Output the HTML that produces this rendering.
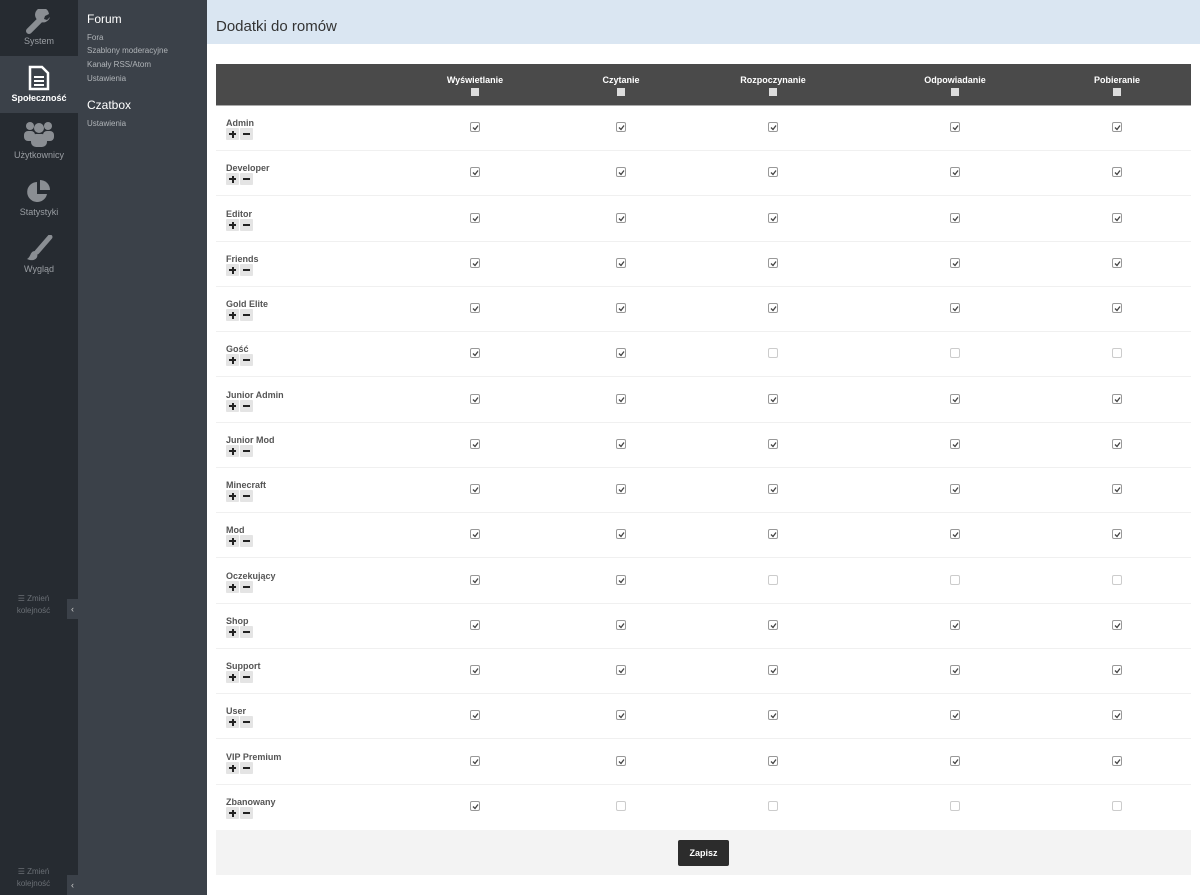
<!DOCTYPE html>
<html><head><meta charset="utf-8"><style>
*{margin:0;padding:0;box-sizing:border-box}
body{width:1200px;height:895px;overflow:hidden;font-family:"Liberation Sans",sans-serif;background:#fff;position:relative}
.s1{position:absolute;left:0;top:0;width:78px;height:895px;background:#262b31}
.s2{position:absolute;left:78px;top:0;width:129px;height:895px;background:#3b4149}
.act{position:absolute;left:0;top:56px;width:78px;height:57px;background:#3b4149}
.ni{position:absolute;left:0;width:78px;text-align:center;font-size:9px;color:#9a9ea3}
.s2 h3{position:absolute;left:9px;font-size:12px;color:#fff;font-weight:normal}
.s2 a{position:absolute;left:9px;font-size:8px;color:#b0b4b8}
.hdr{position:absolute;left:207px;top:0;width:993px;height:44px;background:#dae6f2}
.hdr span{position:absolute;left:9px;top:18px;font-size:15px;color:#333}
.th{position:absolute;left:216px;top:64px;width:975px;height:42px;background:#4a4a4a;border-bottom:1px solid #aaa}
.th div{position:absolute;top:11px;width:120px;margin-left:-60px;text-align:center;color:#fff;font-size:9px;font-weight:bold}
.th i{display:block;width:8px;height:8px;background:#ddd;margin:3px auto 0}
.row{position:absolute;left:216px;width:975px;height:45px;border-bottom:1px solid #f0f0f0}
.row b{position:absolute;left:10px;top:12px;font-size:9px;color:#555}
.pm{position:absolute;left:10px;top:22px;height:13px}
.pm span{position:relative;display:inline-block;width:13px;height:12px;background:#e4e4e4;border-radius:1px;margin-right:1px;vertical-align:top}
.pm span.p:before{content:"";position:absolute;left:3px;top:5px;width:7px;height:2px;background:#222}
.pm span.p:after{content:"";position:absolute;left:5.5px;top:2.5px;width:2px;height:7px;background:#222}
.pm span.m:before{content:"";position:absolute;left:3px;top:5px;width:7px;height:2px;background:#222}
.cb{position:absolute;top:16px;width:10px;height:10px;margin-left:-5px;border:1px solid #999;border-radius:2px;background:#fff}
.cb.u{border-color:#ccc}
.cb svg{position:absolute;left:1px;top:1px}
.ft{position:absolute;left:216px;top:830px;width:975px;height:45px;background:#f3f3f3}
.btn{position:absolute;left:678px;top:840px;width:51px;height:26px;background:#2c2c2c;border-radius:2px;color:#fff;font-size:9px;font-weight:bold;text-align:center;line-height:26px}
.tog{position:absolute;left:67px;width:11px;height:20px;background:#3b4149;color:#ccc;font-size:9px;text-align:center;line-height:20px}
.zm{position:absolute;left:0;width:67px;text-align:center;font-size:8px;color:#6a6f75;line-height:12px}
</style></head><body>
<div class="s1"></div>
<div class="act"></div>
<svg style="position:absolute;left:25px;top:9px" width="28" height="26" viewBox="0 0 28 26"><path d="M4 22 L15 11" stroke="#8a8e93" stroke-width="6" stroke-linecap="round"/><path d="M14 12 A7 7 0 1 1 24 5 L20 7 L19 10 L22 11 L25 8 A7 7 0 0 1 14 12Z" fill="#8a8e93"/></svg>
<div class="ni" style="top:36px">System</div>
<svg style="position:absolute;left:28px;top:65px" width="22" height="26" viewBox="0 0 22 26"><path d="M2 2 H14 L20 8 V24 H2Z" fill="none" stroke="#fff" stroke-width="2.5"/><path d="M6 12H16M6 16H16M6 20H16" stroke="#fff" stroke-width="2"/></svg>
<div class="ni" style="top:93px;color:#fff;font-weight:bold">Społeczność</div>
<svg style="position:absolute;left:23px;top:120px" width="32" height="28" viewBox="0 0 32 28"><g fill="#8a8e93"><circle cx="7" cy="6" r="4"/><circle cx="25" cy="6" r="4"/><circle cx="16" cy="8" r="5"/><rect x="1" y="11" width="11" height="10" rx="4"/><rect x="20" y="11" width="11" height="10" rx="4"/><rect x="8" y="14" width="16" height="13" rx="5"/></g></svg>
<div class="ni" style="top:150px">Użytkownicy</div>
<svg style="position:absolute;left:26px;top:179px" width="26" height="26" viewBox="0 0 26 26"><path d="M11 3 A10 10 0 1 0 21 15 H11Z" fill="#8a8e93"/><path d="M14 1 A10 10 0 0 1 24 11 H14Z" fill="#8a8e93"/></svg>
<div class="ni" style="top:207px">Statystyki</div>
<svg style="position:absolute;left:25px;top:235px" width="28" height="28" viewBox="0 0 28 28"><path d="M25 2 L12 17" stroke="#8a8e93" stroke-width="5" stroke-linecap="round"/><path d="M10 16 C5 16 6 22 2 24 C8 27 14 24 12 18Z" fill="#8a8e93"/></svg>
<div class="ni" style="top:264px">Wygląd</div>
<div class="zm" style="top:593px">☰ Zmień<br>kolejność</div>
<div class="tog" style="top:599px">‹</div>
<div class="zm" style="top:866px">☰ Zmień<br>kolejność</div>
<div class="tog" style="top:875px">‹</div>
<div class="s2">
<h3 style="top:12px">Forum</h3>
<a style="top:33px">Fora</a><a style="top:46px">Szablony moderacyjne</a><a style="top:60px">Kanały RSS/Atom</a><a style="top:74px">Ustawienia</a>
<h3 style="top:98px">Czatbox</h3>
<a style="top:119px">Ustawienia</a>
</div>
<div class="hdr"><span>Dodatki do romów</span></div>
<div class="th">
<div style="left:259px">Wyświetlanie<i></i></div>
<div style="left:405px">Czytanie<i></i></div>
<div style="left:557px">Rozpoczynanie<i></i></div>
<div style="left:739px">Odpowiadanie<i></i></div>
<div style="left:901px">Pobieranie<i></i></div>
</div>
<div class="row" style="top:106px"><b>Admin</b><div class="pm"><span class="p"></span><span class="m"></span></div><div class="cb" style="left:259px"><svg width="7" height="7"><path d="M1 3.5L3 5.5L6 1.5" stroke="#444" stroke-width="1.3" fill="none"/></svg></div><div class="cb" style="left:405px"><svg width="7" height="7"><path d="M1 3.5L3 5.5L6 1.5" stroke="#444" stroke-width="1.3" fill="none"/></svg></div><div class="cb" style="left:557px"><svg width="7" height="7"><path d="M1 3.5L3 5.5L6 1.5" stroke="#444" stroke-width="1.3" fill="none"/></svg></div><div class="cb" style="left:739px"><svg width="7" height="7"><path d="M1 3.5L3 5.5L6 1.5" stroke="#444" stroke-width="1.3" fill="none"/></svg></div><div class="cb" style="left:901px"><svg width="7" height="7"><path d="M1 3.5L3 5.5L6 1.5" stroke="#444" stroke-width="1.3" fill="none"/></svg></div></div>
<div class="row" style="top:151px"><b>Developer</b><div class="pm"><span class="p"></span><span class="m"></span></div><div class="cb" style="left:259px"><svg width="7" height="7"><path d="M1 3.5L3 5.5L6 1.5" stroke="#444" stroke-width="1.3" fill="none"/></svg></div><div class="cb" style="left:405px"><svg width="7" height="7"><path d="M1 3.5L3 5.5L6 1.5" stroke="#444" stroke-width="1.3" fill="none"/></svg></div><div class="cb" style="left:557px"><svg width="7" height="7"><path d="M1 3.5L3 5.5L6 1.5" stroke="#444" stroke-width="1.3" fill="none"/></svg></div><div class="cb" style="left:739px"><svg width="7" height="7"><path d="M1 3.5L3 5.5L6 1.5" stroke="#444" stroke-width="1.3" fill="none"/></svg></div><div class="cb" style="left:901px"><svg width="7" height="7"><path d="M1 3.5L3 5.5L6 1.5" stroke="#444" stroke-width="1.3" fill="none"/></svg></div></div>
<div class="row" style="top:197px"><b>Editor</b><div class="pm"><span class="p"></span><span class="m"></span></div><div class="cb" style="left:259px"><svg width="7" height="7"><path d="M1 3.5L3 5.5L6 1.5" stroke="#444" stroke-width="1.3" fill="none"/></svg></div><div class="cb" style="left:405px"><svg width="7" height="7"><path d="M1 3.5L3 5.5L6 1.5" stroke="#444" stroke-width="1.3" fill="none"/></svg></div><div class="cb" style="left:557px"><svg width="7" height="7"><path d="M1 3.5L3 5.5L6 1.5" stroke="#444" stroke-width="1.3" fill="none"/></svg></div><div class="cb" style="left:739px"><svg width="7" height="7"><path d="M1 3.5L3 5.5L6 1.5" stroke="#444" stroke-width="1.3" fill="none"/></svg></div><div class="cb" style="left:901px"><svg width="7" height="7"><path d="M1 3.5L3 5.5L6 1.5" stroke="#444" stroke-width="1.3" fill="none"/></svg></div></div>
<div class="row" style="top:242px"><b>Friends</b><div class="pm"><span class="p"></span><span class="m"></span></div><div class="cb" style="left:259px"><svg width="7" height="7"><path d="M1 3.5L3 5.5L6 1.5" stroke="#444" stroke-width="1.3" fill="none"/></svg></div><div class="cb" style="left:405px"><svg width="7" height="7"><path d="M1 3.5L3 5.5L6 1.5" stroke="#444" stroke-width="1.3" fill="none"/></svg></div><div class="cb" style="left:557px"><svg width="7" height="7"><path d="M1 3.5L3 5.5L6 1.5" stroke="#444" stroke-width="1.3" fill="none"/></svg></div><div class="cb" style="left:739px"><svg width="7" height="7"><path d="M1 3.5L3 5.5L6 1.5" stroke="#444" stroke-width="1.3" fill="none"/></svg></div><div class="cb" style="left:901px"><svg width="7" height="7"><path d="M1 3.5L3 5.5L6 1.5" stroke="#444" stroke-width="1.3" fill="none"/></svg></div></div>
<div class="row" style="top:287px"><b>Gold Elite</b><div class="pm"><span class="p"></span><span class="m"></span></div><div class="cb" style="left:259px"><svg width="7" height="7"><path d="M1 3.5L3 5.5L6 1.5" stroke="#444" stroke-width="1.3" fill="none"/></svg></div><div class="cb" style="left:405px"><svg width="7" height="7"><path d="M1 3.5L3 5.5L6 1.5" stroke="#444" stroke-width="1.3" fill="none"/></svg></div><div class="cb" style="left:557px"><svg width="7" height="7"><path d="M1 3.5L3 5.5L6 1.5" stroke="#444" stroke-width="1.3" fill="none"/></svg></div><div class="cb" style="left:739px"><svg width="7" height="7"><path d="M1 3.5L3 5.5L6 1.5" stroke="#444" stroke-width="1.3" fill="none"/></svg></div><div class="cb" style="left:901px"><svg width="7" height="7"><path d="M1 3.5L3 5.5L6 1.5" stroke="#444" stroke-width="1.3" fill="none"/></svg></div></div>
<div class="row" style="top:332px"><b>Gość</b><div class="pm"><span class="p"></span><span class="m"></span></div><div class="cb" style="left:259px"><svg width="7" height="7"><path d="M1 3.5L3 5.5L6 1.5" stroke="#444" stroke-width="1.3" fill="none"/></svg></div><div class="cb" style="left:405px"><svg width="7" height="7"><path d="M1 3.5L3 5.5L6 1.5" stroke="#444" stroke-width="1.3" fill="none"/></svg></div><div class="cb u" style="left:557px"></div><div class="cb u" style="left:739px"></div><div class="cb u" style="left:901px"></div></div>
<div class="row" style="top:378px"><b>Junior Admin</b><div class="pm"><span class="p"></span><span class="m"></span></div><div class="cb" style="left:259px"><svg width="7" height="7"><path d="M1 3.5L3 5.5L6 1.5" stroke="#444" stroke-width="1.3" fill="none"/></svg></div><div class="cb" style="left:405px"><svg width="7" height="7"><path d="M1 3.5L3 5.5L6 1.5" stroke="#444" stroke-width="1.3" fill="none"/></svg></div><div class="cb" style="left:557px"><svg width="7" height="7"><path d="M1 3.5L3 5.5L6 1.5" stroke="#444" stroke-width="1.3" fill="none"/></svg></div><div class="cb" style="left:739px"><svg width="7" height="7"><path d="M1 3.5L3 5.5L6 1.5" stroke="#444" stroke-width="1.3" fill="none"/></svg></div><div class="cb" style="left:901px"><svg width="7" height="7"><path d="M1 3.5L3 5.5L6 1.5" stroke="#444" stroke-width="1.3" fill="none"/></svg></div></div>
<div class="row" style="top:423px"><b>Junior Mod</b><div class="pm"><span class="p"></span><span class="m"></span></div><div class="cb" style="left:259px"><svg width="7" height="7"><path d="M1 3.5L3 5.5L6 1.5" stroke="#444" stroke-width="1.3" fill="none"/></svg></div><div class="cb" style="left:405px"><svg width="7" height="7"><path d="M1 3.5L3 5.5L6 1.5" stroke="#444" stroke-width="1.3" fill="none"/></svg></div><div class="cb" style="left:557px"><svg width="7" height="7"><path d="M1 3.5L3 5.5L6 1.5" stroke="#444" stroke-width="1.3" fill="none"/></svg></div><div class="cb" style="left:739px"><svg width="7" height="7"><path d="M1 3.5L3 5.5L6 1.5" stroke="#444" stroke-width="1.3" fill="none"/></svg></div><div class="cb" style="left:901px"><svg width="7" height="7"><path d="M1 3.5L3 5.5L6 1.5" stroke="#444" stroke-width="1.3" fill="none"/></svg></div></div>
<div class="row" style="top:468px"><b>Minecraft</b><div class="pm"><span class="p"></span><span class="m"></span></div><div class="cb" style="left:259px"><svg width="7" height="7"><path d="M1 3.5L3 5.5L6 1.5" stroke="#444" stroke-width="1.3" fill="none"/></svg></div><div class="cb" style="left:405px"><svg width="7" height="7"><path d="M1 3.5L3 5.5L6 1.5" stroke="#444" stroke-width="1.3" fill="none"/></svg></div><div class="cb" style="left:557px"><svg width="7" height="7"><path d="M1 3.5L3 5.5L6 1.5" stroke="#444" stroke-width="1.3" fill="none"/></svg></div><div class="cb" style="left:739px"><svg width="7" height="7"><path d="M1 3.5L3 5.5L6 1.5" stroke="#444" stroke-width="1.3" fill="none"/></svg></div><div class="cb" style="left:901px"><svg width="7" height="7"><path d="M1 3.5L3 5.5L6 1.5" stroke="#444" stroke-width="1.3" fill="none"/></svg></div></div>
<div class="row" style="top:513px"><b>Mod</b><div class="pm"><span class="p"></span><span class="m"></span></div><div class="cb" style="left:259px"><svg width="7" height="7"><path d="M1 3.5L3 5.5L6 1.5" stroke="#444" stroke-width="1.3" fill="none"/></svg></div><div class="cb" style="left:405px"><svg width="7" height="7"><path d="M1 3.5L3 5.5L6 1.5" stroke="#444" stroke-width="1.3" fill="none"/></svg></div><div class="cb" style="left:557px"><svg width="7" height="7"><path d="M1 3.5L3 5.5L6 1.5" stroke="#444" stroke-width="1.3" fill="none"/></svg></div><div class="cb" style="left:739px"><svg width="7" height="7"><path d="M1 3.5L3 5.5L6 1.5" stroke="#444" stroke-width="1.3" fill="none"/></svg></div><div class="cb" style="left:901px"><svg width="7" height="7"><path d="M1 3.5L3 5.5L6 1.5" stroke="#444" stroke-width="1.3" fill="none"/></svg></div></div>
<div class="row" style="top:559px"><b>Oczekujący</b><div class="pm"><span class="p"></span><span class="m"></span></div><div class="cb" style="left:259px"><svg width="7" height="7"><path d="M1 3.5L3 5.5L6 1.5" stroke="#444" stroke-width="1.3" fill="none"/></svg></div><div class="cb" style="left:405px"><svg width="7" height="7"><path d="M1 3.5L3 5.5L6 1.5" stroke="#444" stroke-width="1.3" fill="none"/></svg></div><div class="cb u" style="left:557px"></div><div class="cb u" style="left:739px"></div><div class="cb u" style="left:901px"></div></div>
<div class="row" style="top:604px"><b>Shop</b><div class="pm"><span class="p"></span><span class="m"></span></div><div class="cb" style="left:259px"><svg width="7" height="7"><path d="M1 3.5L3 5.5L6 1.5" stroke="#444" stroke-width="1.3" fill="none"/></svg></div><div class="cb" style="left:405px"><svg width="7" height="7"><path d="M1 3.5L3 5.5L6 1.5" stroke="#444" stroke-width="1.3" fill="none"/></svg></div><div class="cb" style="left:557px"><svg width="7" height="7"><path d="M1 3.5L3 5.5L6 1.5" stroke="#444" stroke-width="1.3" fill="none"/></svg></div><div class="cb" style="left:739px"><svg width="7" height="7"><path d="M1 3.5L3 5.5L6 1.5" stroke="#444" stroke-width="1.3" fill="none"/></svg></div><div class="cb" style="left:901px"><svg width="7" height="7"><path d="M1 3.5L3 5.5L6 1.5" stroke="#444" stroke-width="1.3" fill="none"/></svg></div></div>
<div class="row" style="top:649px"><b>Support</b><div class="pm"><span class="p"></span><span class="m"></span></div><div class="cb" style="left:259px"><svg width="7" height="7"><path d="M1 3.5L3 5.5L6 1.5" stroke="#444" stroke-width="1.3" fill="none"/></svg></div><div class="cb" style="left:405px"><svg width="7" height="7"><path d="M1 3.5L3 5.5L6 1.5" stroke="#444" stroke-width="1.3" fill="none"/></svg></div><div class="cb" style="left:557px"><svg width="7" height="7"><path d="M1 3.5L3 5.5L6 1.5" stroke="#444" stroke-width="1.3" fill="none"/></svg></div><div class="cb" style="left:739px"><svg width="7" height="7"><path d="M1 3.5L3 5.5L6 1.5" stroke="#444" stroke-width="1.3" fill="none"/></svg></div><div class="cb" style="left:901px"><svg width="7" height="7"><path d="M1 3.5L3 5.5L6 1.5" stroke="#444" stroke-width="1.3" fill="none"/></svg></div></div>
<div class="row" style="top:694px"><b>User</b><div class="pm"><span class="p"></span><span class="m"></span></div><div class="cb" style="left:259px"><svg width="7" height="7"><path d="M1 3.5L3 5.5L6 1.5" stroke="#444" stroke-width="1.3" fill="none"/></svg></div><div class="cb" style="left:405px"><svg width="7" height="7"><path d="M1 3.5L3 5.5L6 1.5" stroke="#444" stroke-width="1.3" fill="none"/></svg></div><div class="cb" style="left:557px"><svg width="7" height="7"><path d="M1 3.5L3 5.5L6 1.5" stroke="#444" stroke-width="1.3" fill="none"/></svg></div><div class="cb" style="left:739px"><svg width="7" height="7"><path d="M1 3.5L3 5.5L6 1.5" stroke="#444" stroke-width="1.3" fill="none"/></svg></div><div class="cb" style="left:901px"><svg width="7" height="7"><path d="M1 3.5L3 5.5L6 1.5" stroke="#444" stroke-width="1.3" fill="none"/></svg></div></div>
<div class="row" style="top:740px"><b>VIP Premium</b><div class="pm"><span class="p"></span><span class="m"></span></div><div class="cb" style="left:259px"><svg width="7" height="7"><path d="M1 3.5L3 5.5L6 1.5" stroke="#444" stroke-width="1.3" fill="none"/></svg></div><div class="cb" style="left:405px"><svg width="7" height="7"><path d="M1 3.5L3 5.5L6 1.5" stroke="#444" stroke-width="1.3" fill="none"/></svg></div><div class="cb" style="left:557px"><svg width="7" height="7"><path d="M1 3.5L3 5.5L6 1.5" stroke="#444" stroke-width="1.3" fill="none"/></svg></div><div class="cb" style="left:739px"><svg width="7" height="7"><path d="M1 3.5L3 5.5L6 1.5" stroke="#444" stroke-width="1.3" fill="none"/></svg></div><div class="cb" style="left:901px"><svg width="7" height="7"><path d="M1 3.5L3 5.5L6 1.5" stroke="#444" stroke-width="1.3" fill="none"/></svg></div></div>
<div class="row" style="top:785px;border:none"><b>Zbanowany</b><div class="pm"><span class="p"></span><span class="m"></span></div><div class="cb" style="left:259px"><svg width="7" height="7"><path d="M1 3.5L3 5.5L6 1.5" stroke="#444" stroke-width="1.3" fill="none"/></svg></div><div class="cb u" style="left:405px"></div><div class="cb u" style="left:557px"></div><div class="cb u" style="left:739px"></div><div class="cb u" style="left:901px"></div></div>
<div class="ft"></div>
<div class="btn">Zapisz</div>
</body></html>
